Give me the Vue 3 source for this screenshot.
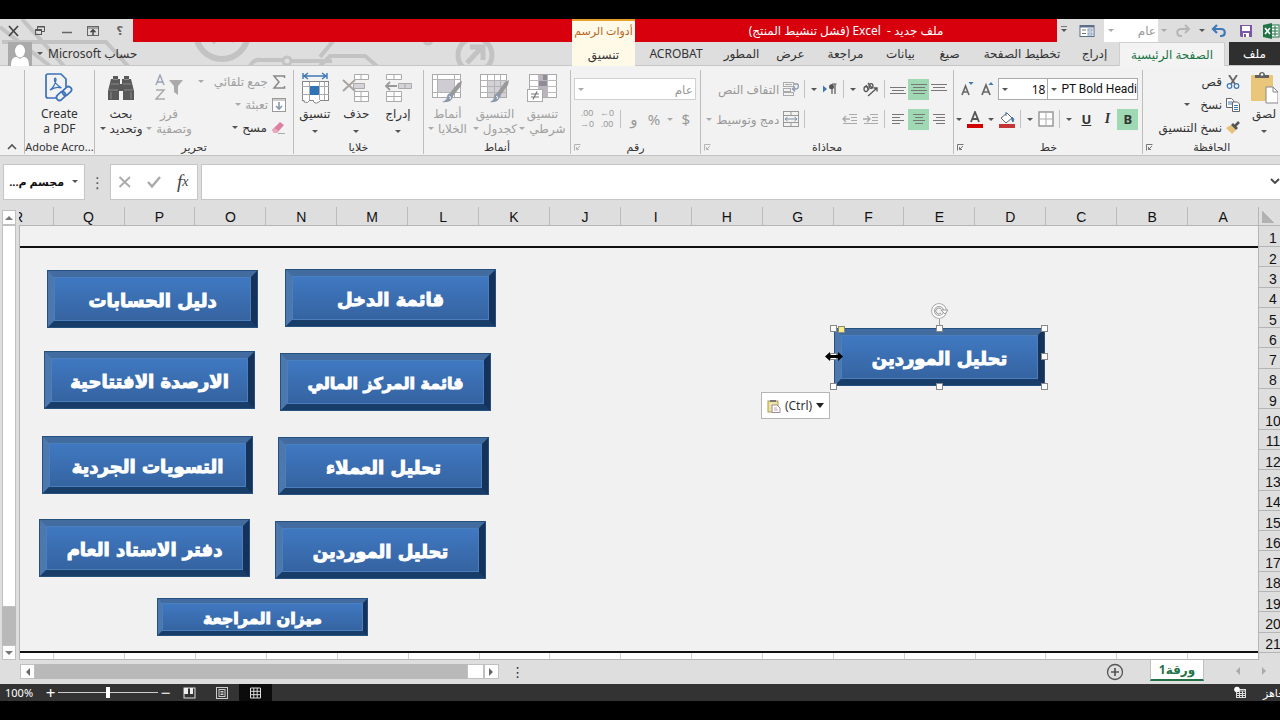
<script setup>
import { ref, h } from 'vue'

const icons = {
  close: [12, 12, '<path d="M2 1l9 10M11 1L2 11" stroke="#444" stroke-width="1.7" fill="none"/>'],
  restore: [12, 12, '<path d="M3.500 4V1.500h7v5H8" stroke="#555" fill="none"/><path d="M3 2h8" stroke="#555"/><rect x="1.500" y="5" width="6" height="4.500" stroke="#555" fill="none"/><path d="M1 5h7" stroke="#555" stroke-width="2"/>'],
  minimize: [12, 12, '<path d="M1 7.500h10" stroke="#666" stroke-width="1.500"/>'],
  ribbonOpts: [14, 12, '<rect x="1.500" y="1.500" width="11" height="9" fill="none" stroke="#666"/><path d="M1 3h12" stroke="#666"/><path d="M7 10V5M4.500 7.200L7 4.800l2.500 2.400" stroke="#444" stroke-width="1.500" fill="none"/>'],
  avatar: [24, 24, '<rect width="24" height="24" fill="#aaa"/><ellipse cx="12" cy="9" rx="5" ry="6.500" fill="#fff"/><path d="M3 24c0-8 3-9 6-9l3 2 3-2c3 0 6 1 6 9z" fill="#fff"/>'],
  excel: [18, 16, '<rect x="9" y="2" width="8" height="12" fill="#fff" stroke="#217346"/><path d="M10 5h6M10 8h6M10 11h6M13 3v10" stroke="#217346"/><path d="M1 2l9-2v16l-9-2z" fill="#217346"/><path d="M3 5l5 6M8 5l-5 6" stroke="#fff" stroke-width="1.600"/>'],
  save: [14, 14, '<path d="M1 1h12v12H2l-1-1z" fill="#7b55a8"/><rect x="3" y="2" width="8" height="5" fill="#fff"/><rect x="4" y="9" width="6" height="4" fill="#fff"/><rect x="5" y="10" width="2" height="3" fill="#7b55a8"/>'],
  undo: [16, 14, '<path d="M2 5h8c5 0 5 7 0 7H9M6 1L2 5l4 4" fill="none" stroke="#3f78b5" stroke-width="2.200"/>'],
  redo: [16, 14, '<path d="M14 5H6c-5 0-5 7 0 7h1M10 1l4 4-4 4" fill="none" stroke="#b5b5b5" stroke-width="2"/>'],
  form: [16, 14, '<rect x="1" y="1.500" width="14" height="11" fill="#fff" stroke="#5b6f88"/><path d="M1 2.500h14" stroke="#5b6f88" stroke-width="2"/><path d="M3 6h4M3 9.500h4" stroke="#777"/><rect x="9" y="5" width="4" height="2" fill="none" stroke="#7d96b5"/><rect x="9" y="9" width="4" height="2" fill="none" stroke="#7d96b5"/>'],
  paste: [28, 32, '<rect x="1" y="3" width="22" height="26" rx="1" fill="#eac67a"/><path d="M5 6V3h4c0-4 6-4 6 0h4v3z" fill="#5f5f5f"/><circle cx="12" cy="2.500" r="1.300" fill="#fff"/><path d="M16 15h7l5 5v11H16z" fill="#fff" stroke="#888"/><path d="M23 15v5h5" fill="none" stroke="#888"/>'],
  cut: [14, 14, '<path d="M3 0l6 9M11 0L5 9" stroke="#666" stroke-width="1.800"/><circle cx="3.500" cy="11" r="2.300" fill="none" stroke="#3f78b5" stroke-width="1.200"/><circle cx="10.500" cy="11" r="2.300" fill="none" stroke="#3f78b5" stroke-width="1.200"/>'],
  copy: [14, 14, '<path d="M.5.5h5l2 2v7h-7z" fill="#fff" stroke="#666"/><path d="M2 4h4M2 6h4" stroke="#3f78b5"/><path d="M6.500 4h5l2 2v7.500h-7z" fill="#fff" stroke="#666"/><path d="M8 7.500h4M8 9.500h4M8 11.500h4" stroke="#3f78b5"/>'],
  painter: [14, 14, '<path d="M0 7l5-3 5 5-4 4z" fill="#e8c178"/><path d="M5 4l2-2 5 5-2 2z" fill="#555"/><path d="M9 5l4-4" stroke="#555" stroke-width="2.500"/>'],
  borders: [16, 16, '<rect x="1" y="1" width="14" height="14" fill="#fff" stroke="#999" stroke-width="1.500"/><path d="M8 2v12M2 8h12" stroke="#aaa"/>'],
  bucket: [18, 17, '<path d="M3 7l6-5 5 5-6 5z" fill="#fff" stroke="#666"/><path d="M8 5V1M14 6q3 2 1 5-2-2-1-5" stroke="#3f78b5" fill="#3f78b5"/><rect x="1" y="13" width="16" height="4" fill="#c43535"/>'],
  fontColor: [18, 17, '<path d="M5 11L9 1l4 10M6.500 8h5" fill="none" stroke="#555" stroke-width="1.800"/><rect x="1" y="13" width="16" height="4" fill="#d40000"/>'],
  grow: [14, 16, '<path d="M1 14L5 4l4 10M2.500 11h5" fill="none" stroke="#666" stroke-width="1.700"/><path d="M7.500 4h5L10 1z" fill="#3f78b5"/>'],
  shrink: [14, 16, '<path d="M1 14L4.500 5 8 14M2.500 11h4" fill="none" stroke="#666" stroke-width="1.600"/><path d="M7.500 1h5L10 4z" fill="#3f78b5"/>'],
  vTop: [16, 14, '<path d="M0 2.500h16M2 5.500h12M0 8.500h16" stroke="#777" stroke-width="1.200"/>'],
  vMid: [16, 14, '<path d="M0 2.500h16M2 5.500h12M0 8.500h16M2 11.500h12" stroke="#777" stroke-width="1.200"/>'],
  vBot: [16, 14, '<path d="M0 5.500h16M2 8.500h12M0 11.500h16" stroke="#777" stroke-width="1.200"/>'],
  hRight: [16, 14, '<path d="M2 2.500h12M5 5.500h9M2 8.500h12M5 11.500h9" stroke="#777" stroke-width="1.200"/>'],
  hCenter: [16, 14, '<path d="M2 2.500h12M4 5.500h8M2 8.500h12M4 11.500h8" stroke="#777" stroke-width="1.200"/>'],
  hLeft: [16, 14, '<path d="M2 2.500h12M2 5.500h8M2 8.500h12M2 11.500h8" stroke="#777" stroke-width="1.200"/>'],
  orient: [16, 16, '<g fill="none" stroke="#555" stroke-width="1.300"><ellipse cx="4" cy="8" rx="2" ry="2.500"/><path d="M4 4l3 5M6 2l4 5"/><ellipse cx="9" cy="5" rx="2" ry="2.400"/><path d="M6 15l9-8M11.500 7H15v3.500"/></g>'],
  rtlText: [14, 12, '<path d="M0 2.500l4 3.500-4 3.500z" fill="#3f78b5"/><path d="M9 11V1M12 11V1M13.500 1H9" stroke="#555" stroke-width="1.200"/><circle cx="8.500" cy="3.700" r="2.500" fill="#555"/>'],
  indentR: [15, 12, '<path d="M7 1.500h8M9 4.500h6M9 7.500h6M1 10.500h14" stroke="#aaa"/><path d="M0 6h7M4 3l3 3-3 3" fill="none" stroke="#aaa" stroke-width="1.400"/>'],
  indentL: [15, 12, '<path d="M7 1.500h8M9 4.500h6M9 7.500h6M1 10.500h14" stroke="#aaa"/><path d="M8 6H1M4 3L1 6l3 3" fill="none" stroke="#aaa" stroke-width="1.400"/>'],
  wrap: [16, 16, '<g fill="none" stroke="#aaa"><rect x=".5" y="1.500" width="10" height="4"/><rect x=".5" y="7.500" width="7" height="3"/><rect x=".5" y="11.500" width="10" height="3"/><path d="M2 3.500h7"/></g><path d="M11 3h3c2 0 2 5-1 5H10M12 5.500L9.500 8l2.500 2.500" fill="none" stroke="#8e9bb0" stroke-width="1.400"/>'],
  merge: [16, 16, '<g fill="none" stroke="#999"><rect x=".5" y=".5" width="15" height="15"/><path d="M0 4.500h16M0 11.500h16M8 0v4M8 12v4"/></g><path d="M2 8h12M4.500 6L2 8l2.500 2M11.500 6L14 8l-2.500 2" fill="none" stroke="#7f8ea5"/>'],
  cond: [30, 30, '<rect x="2.500" y="1.500" width="27" height="23" fill="#fff" stroke="#aaa"/><path d="M3 7.500h27M3 13.500h27M3 19.500h27M11.500 2v22M20.500 2v22" stroke="#bbb"/><rect x="12" y="2" width="8" height="22" fill="#b9b4be"/><path d="M16 2h4v5h-4zM12 8h8v5h-8z" fill="#908c96"/><rect x=".5" y="16.500" width="15" height="12" fill="#fff" stroke="#aaa"/><path d="M4 21h8M4 24h8M10 18.500l-4 8" stroke="#777" stroke-width="1.200"/>'],
  tbl: [30, 30, '<rect x=".5" y="1.500" width="26" height="23" fill="#fff" stroke="#aaa"/><rect x="7" y="8" width="19" height="16" fill="#d3d0d6"/><path d="M1 7.500h26M1 13.500h26M1 19.500h26M7.500 2v22M14.500 2v22M20.500 2v22" stroke="#b4b4b4"/><path d="M29 7l-4 2-8 11 3 3 8-11z" fill="#999"/><path d="M17 20q5 1 2 6-3 4-9 3 4-2 4-5 0-3 3-4z" fill="#8c99aa"/><path d="M16 23q3 1 1 3" stroke="#fff" fill="none"/>'],
  cellSt: [32, 30, '<rect x="1.500" y="1.500" width="28" height="23" fill="#fff" stroke="#aaa"/><rect x="7" y="7" width="16" height="12" fill="#cfccd3"/><path d="M2 6.500h28M2 19.500h28M6.500 2v22M23.500 2v22" stroke="#b4b4b4"/><path d="M31 8l-4 2-8 10 3 3 8-10z" fill="#999"/><path d="M19 20q5 1 2 6-3 4-10 3 5-2 5-5 0-3 3-4z" fill="#8c99aa"/><path d="M18 23q3 1 1 3" stroke="#fff" fill="none"/>'],
  insert: [28, 30, '<g fill="#fff" stroke="#aaa"><path d="M2.500 1.500h15v5h-15zM10 1.500v5M2.500 18.500h15v10h-15zM10 18.500v10M2.500 23.500h15"/><path d="M14.500 10.500h13v5h-13zM21 10.500v5" fill="#d5d2d8"/></g><path d="M13 13H2M6 9l-4 4 4 4" fill="none" stroke="#999" stroke-width="1.800"/>'],
  del: [28, 30, '<g fill="#fff" stroke="#aaa"><path d="M12.500 1.500h14v5h-14zM19 1.500v5M12.500 18.500h14v10h-14zM19 18.500v10M12.500 23.500h14"/><path d="M11.500 10.500h11v5h-11z" fill="#d5d2d8"/></g><path d="M1 7l12 11M13 7L1 18" fill="none" stroke="#aaa59e" stroke-width="2"/>'],
  fmt: [28, 32, '<path d="M2 1v6M26 1v6M3 4h22M7 1L3 4l4 3M21 1l4 3-4 3" fill="none" stroke="#3f78b5" stroke-width="1.400"/><rect x="1.500" y="9.500" width="26" height="19" fill="#fff" stroke="#888"/><path d="M1 14.500h27M1 22.500h27M8.500 10v18M18.500 10v18M23.500 10v18" stroke="#aaa"/><rect x="9" y="14" width="9" height="9" fill="#2f75b5"/><path d="M3 28v2q4 2 6-2M12 28q1 5 6 2l2-2" fill="#fff" stroke="#888"/>'],
  sigma: [14, 14, '<path d="M12.500 3V1H2l5 6-5 6h10.500v-2" fill="none" stroke="#888" stroke-width="1.500"/>'],
  fill: [14, 14, '<rect x=".5" y=".5" width="13" height="13" fill="#fff" stroke="#999"/><path d="M0 2h14" stroke="#999"/><path d="M7 4v7M4 8l3 3 3-3" fill="none" stroke="#8798ad" stroke-width="1.600"/>'],
  eraser: [15, 14, '<path d="M1 9L9 1l4 3-7 8H3z" fill="#dd7fa2"/><path d="M1 9l2-2 5 3-2 2H3z" fill="#e9a9c0"/><path d="M7 12.500h7" stroke="#aaa"/>'],
  sort: [28, 28, '<path d="M1 11L5 1l4 10M2.500 8h5" fill="none" stroke="#9aa3b3" stroke-width="1.400"/><path d="M1 16h8l-8 9h9" fill="none" stroke="#aaa" stroke-width="1.500"/><path d="M14 6h14l-5 6v9l-4-3v-6z" fill="#aaa"/>'],
  find: [28, 26, '<path d="M6 1h5v3h2v5h2V4h2V1h5v3h2l3 12v9H16v-9h-4v9H1v-9L4 4h2z" fill="#595959"/><path d="M6 4.500h5M17 4.500h5M4 9h8M16 9h8M2 15h9M17 15h9M4 17v7M24 17v7" stroke="#8b8b8b"/>'],
  pdf: [28, 30, '<path d="M3 1h13l5 5v8M3 1q-2 0-2 2v20q0 2 2 2h8" fill="none" stroke="#3b72ba" stroke-width="1.700"/><path d="M5 17q5-4 6-10 0-3-1.500-1-1 4 7 9-6-2-11 2" fill="none" stroke="#3b72ba" stroke-width="1.300"/><g fill="none" stroke="#3b72ba" stroke-width="1.700"><rect x="11" y="20" width="10" height="6" rx="3" transform="rotate(-42 16 23)"/><rect x="17" y="15" width="10" height="6" rx="3" transform="rotate(-42 22 18)"/></g>'],
  launcher: [7, 7, '<path d="M6.500.5h-6v6M6 2L2.500 5.500M2.500 3v2.500H5" fill="none" stroke="#777"/>'],
  chevUp: [10, 7, '<path d="M1 6l4-4 4 4" fill="none" stroke="#555" stroke-width="1.600"/>'],
  chevDown: [10, 7, '<path d="M1 1l4 4 4-4" fill="none" stroke="#444" stroke-width="1.800"/>'],
  cancel: [14, 12, '<path d="M1.500 1l10.500 10M12 1L1.500 11" stroke="#aaa" stroke-width="1.800"/>'],
  enter: [14, 12, '<path d="M1 6l4 4.500L13 1" fill="none" stroke="#aaa" stroke-width="2.400"/>'],
  rotate: [18, 18, '<circle cx="8" cy="8" r="6" fill="none" stroke="#999" stroke-width="3.600"/><circle cx="8" cy="8" r="6" fill="none" stroke="#fff" stroke-width="2"/><path d="M10 6a3 3 0 1 0 0 4" fill="none" stroke="#999"/><path d="M10 7h7l-3 4z" fill="#fff" stroke="#999"/>'],
  resize: [18, 9, '<path d="M0 4.500L5 0v3h8V0l5 4.500L13 9V6H5v3z" fill="#000"/>'],
  clip: [14, 14, '<rect x="1" y="2" width="10" height="11" fill="#eee3a0" stroke="#a79b55"/><path d="M3 3V1h6v2z" fill="#777"/><path d="M5 6h5l3 3v4.500H5z" fill="#fff" stroke="#9a8a98"/><path d="M7 9h3M7 11h4" stroke="#c6a1aa"/>'],
  add: [18, 18, '<circle cx="9" cy="9" r="7.500" fill="none" stroke="#555" stroke-width="1.300"/><path d="M9 5v8M5 9h8" stroke="#555" stroke-width="1.700"/>'],
  vBreak: [13, 12, '<rect x="1" y="1" width="11" height="10" fill="none" stroke="#ddd"/><path d="M1 1h4v6H1zM7 1h3v6H7z" fill="#eee"/>'],
  vPage: [13, 12, '<rect x=".5" y=".5" width="11" height="11" fill="none" stroke="#ccc"/><rect x="3" y="2.500" width="6" height="7" fill="none" stroke="#ccc"/><path d="M4.500 4.500h3M4.500 6h3M4.500 7.500h3" stroke="#ccc"/>'],
  vGrid: [13, 12, '<path d="M1.500 1h10v10h-10zM1 4.300h11M1 7.700h11M4.800 1v10M8.200 1v10" fill="none" stroke="#ddd"/>'],
  macro: [13, 13, '<rect x="2.500" y="3.500" width="9" height="8" fill="none" stroke="#ddd"/><path d="M2 5h10M3 7.500h8M3 9.500h8M5.500 5v6M8.500 5v6" stroke="#ddd"/><circle cx="3" cy="3.500" r="2.800" fill="#fff"/>'],
}

const Ico = (props) => {
  const [w, ht, body] = icons[props.name]
  return h('svg', { width: w, height: ht, viewBox: `0 0 ${w} ${ht}`, 'aria-hidden': 'true', innerHTML: body })
}
Ico.props = ['name']

const tabs = [
  { t: 'ملف', c: 'file' },
  { t: 'الصفحة الرئيسية', c: 'active' },
  { t: 'إدراج', c: 'w-s' },
  { t: 'تخطيط الصفحة', c: 'w-xl' },
  { t: 'صيغ', c: 'w-s' },
  { t: 'بيانات', c: 'w-s' },
  { t: 'مراجعة', c: 'w-m' },
  { t: 'عرض', c: 'w-s' },
  { t: 'المطور', c: 'w-s' },
  { t: 'ACROBAT', c: 'w-l' },
]

const styleButtons = [
  { i: 'cond', a: 'تنسيق', b: 'شرطي' },
  { i: 'tbl', a: 'التنسيق', b: 'كجدول' },
  { i: 'cellSt', a: 'أنماط', b: 'الخلايا' },
]
const cellButtons = [
  { i: 'insert', a: 'إدراج' },
  { i: 'del', a: 'حذف' },
  { i: 'fmt', a: 'تنسيق' },
]

const columns = 'ABCDEFGHIJKLMNOPQR'.split('')
const rows = Array.from({ length: 22 }, (_, i) => i + 1)

const shapes = [
  { t: 'دليل الحسابات', x: 27, y: 44 },
  { t: 'قائمة الدخل', x: 265, y: 43 },
  { t: 'الارصدة الافتتاحية', x: 24, y: 125 },
  { t: 'قائمة المركز المالي', x: 260, y: 127, tight: true },
  { t: 'التسويات الجردية', x: 22, y: 210 },
  { t: 'تحليل العملاء', x: 258, y: 211 },
  { t: 'دفتر الاستاد العام', x: 19, y: 293 },
  { t: 'تحليل الموردين', x: 255, y: 295 },
  { t: 'ميزان المراجعة', x: 137, y: 372, small: true, tight: true },
  { t: 'تحليل الموردين', x: 814, y: 102, selected: true },
]
const handles = ['nw', 'n', 'ne', 'w', 'e', 'sw', 's', 'se']

const fontName = ref('PT Bold Heading')
const fontSize = ref('18')
const formula = ref('')
const zoom = ref(100)
</script>

<template>
  <div class="app" dir="rtl">
    <header class="head">
      <svg class="circuit" width="520" height="47" viewBox="0 0 520 47" aria-hidden="true">
        <g fill="none" stroke="#c3c3c3" stroke-width="4">
          <path d="M0 8l50 39M22 0l42 47M2 23h104l22 24M320 47l10-10h35l12 10M320 38l14-17h90" />
          <circle cx="222" cy="14" r="26" stroke-width="6" />
          <path d="M206 14l8 8 8-8 12 8" stroke-width="5" />
          <circle cx="287" cy="42" r="4" stroke-width="3" />
          <path d="M250 47q4-7 10-6h22M292 42h40" />
          <circle cx="428" cy="21" r="4" stroke-width="3" />
          <circle cx="475" cy="36" r="17" stroke-width="5" />
          <path d="M467 44l15-16M470 28h13v13" stroke-width="5" />
        </g>
      </svg>
      <div class="titlebar">
        <div class="qat">
          <span class="cell q-xl"><Ico name="excel" /></span>
          <button class="cell q-save" aria-label="حفظ"><Ico name="save" /></button>
          <button class="cell q-undo" aria-label="تراجع"><Ico name="undo" /></button>
          <button class="cell q-car" aria-label="خيارات التراجع"><i class="caret"></i></button>
          <button class="cell q-redo" aria-label="إعادة"><Ico name="redo" /></button>
          <button class="cell q-car" aria-label="خيارات الإعادة"><i class="caret dim"></i></button>
          <div class="combo q-combo">
            <select aria-label="تنسيق الأرقام السريع"><option>عام</option></select>
            <i class="caret dim"></i>
          </div>
          <button class="cell q-form" aria-label="نموذج"><Ico name="form" /></button>
          <button class="cell q-end" aria-label="تخصيص"><i class="caret bar"></i></button>
        </div>
        <h1 class="title">ملف جديد -&nbsp; Excel (فشل تنشيط المنتج)</h1>
        <div class="ctx-title">أدوات الرسم</div>
        <div class="red"></div>
        <div class="win">
          <button aria-label="تعليمات" class="help">؟</button>
          <button aria-label="خيارات عرض الشريط"><Ico name="ribbonOpts" /></button>
          <button aria-label="تصغير"><Ico name="minimize" /></button>
          <button aria-label="استعادة"><Ico name="restore" /></button>
          <button aria-label="إغلاق"><Ico name="close" /></button>
        </div>
      </div>
      <nav class="tabs">
        <button v-for="t in tabs" :key="t.t" class="tab" :class="t.c">{{ t.t }}</button>
        <button class="tab ctx">تنسيق</button>
        <span class="grow"></span>
        <button class="account">
          <span>حساب Microsoft</span><i class="caret"></i><Ico name="avatar" />
        </button>
      </nav>
    </header>

    <section class="ribbon">
      <div class="group g-clip">
        <div class="body">
          <button class="big b-paste"><span class="pic"><Ico name="paste" /></span><span>لصق</span><span><i class="caret"></i></span></button>
          <div class="stack">
            <button><Ico name="cut" />قص</button>
            <button><Ico name="copy" />نسخ <i class="caret far"></i></button>
            <button><Ico name="painter" />نسخ التنسيق</button>
          </div>
        </div>
        <div class="cap">الحافظة<Ico name="launcher" class="launch" /></div>
      </div>

      <div class="group g-font">
        <div class="rows">
          <div class="row">
            <div class="combo c-font" dir="ltr"><i class="caret"></i><input v-model="fontName" aria-label="الخط" /></div>
            <div class="combo c-size" dir="ltr"><i class="caret"></i><input v-model="fontSize" aria-label="حجم الخط" /></div>
            <button class="cell w20" aria-label="تكبير الخط"><Ico name="grow" /></button>
            <button class="cell w20" aria-label="تصغير الخط"><Ico name="shrink" /></button>
          </div>
          <div class="row">
            <button class="cell w21 on"><b>B</b></button>
            <button class="cell w20 ital"><i>I</i></button>
            <button class="cell w22"><u>U</u></button>
            <button class="cell w12" aria-label="خيارات التسطير"><i class="caret"></i></button>
            <span class="sep"></span>
            <button class="cell w20" aria-label="حدود"><Ico name="borders" /></button>
            <button class="cell w12" aria-label="خيارات الحدود"><i class="caret"></i></button>
            <span class="sep"></span>
            <button class="cell w20" aria-label="لون التعبئة"><Ico name="bucket" /></button>
            <button class="cell w12" aria-label="خيارات التعبئة"><i class="caret"></i></button>
            <button class="cell w20" aria-label="لون الخط"><Ico name="fontColor" /></button>
            <button class="cell w12" aria-label="خيارات اللون"><i class="caret"></i></button>
          </div>
        </div>
        <div class="cap">خط<Ico name="launcher" class="launch" /></div>
      </div>

      <div class="group g-align">
        <div class="rows">
          <div class="row">
            <button class="cell w20" aria-label="محاذاة للأعلى"><Ico name="vTop" /></button>
            <button class="cell w21 on" aria-label="محاذاة للوسط"><Ico name="vMid" /></button>
            <button class="cell w20" aria-label="محاذاة للأسفل"><Ico name="vBot" /></button>
            <span class="sep"></span>
            <button class="cell w22" aria-label="الاتجاه"><Ico name="orient" /></button>
            <button class="cell w12" aria-label="خيارات الاتجاه"><i class="caret"></i></button>
            <span class="sep"></span>
            <button class="cell w20" aria-label="اتجاه النص"><Ico name="rtlText" /></button>
            <button class="cell w12" aria-label="خيارات النص"><i class="caret"></i></button>
            <span class="sep"></span>
            <button class="txt"><Ico name="wrap" />التفاف النص</button>
          </div>
          <div class="row">
            <button class="cell w20" aria-label="محاذاة لليمين"><Ico name="hRight" /></button>
            <button class="cell w21 on" aria-label="توسيط"><Ico name="hCenter" /></button>
            <button class="cell w20" aria-label="محاذاة لليسار"><Ico name="hLeft" /></button>
            <span class="sep"></span>
            <button class="cell w22" aria-label="زيادة المسافة"><Ico name="indentR" /></button>
            <button class="cell w20" aria-label="إنقاص المسافة"><Ico name="indentL" /></button>
            <span class="blank"></span>
            <span class="sep"></span>
            <button class="txt"><Ico name="merge" />دمج وتوسيط<i class="caret dim"></i></button>
          </div>
        </div>
        <div class="cap">محاذاة<Ico name="launcher" class="launch dim" /></div>
      </div>

      <div class="group g-num">
        <div class="rows">
          <div class="row">
            <div class="combo c-num">
              <select aria-label="تنسيق الأرقام"><option>عام</option></select>
              <i class="caret dim"></i>
            </div>
          </div>
          <div class="row">
            <button class="cell w20 sym">$</button>
            <button class="cell w12" aria-label="العملات"><i class="caret dim"></i></button>
            <button class="cell w20 sym">%</button>
            <button class="cell w20 sym">و</button>
            <span class="sep"></span>
            <button class="cell w20 dec" dir="ltr">←0<br />.00</button>
            <button class="cell w20 dec" dir="ltr">.00<br />→0</button>
          </div>
        </div>
        <div class="cap">رقم<Ico name="launcher" class="launch dim" /></div>
      </div>

      <div class="group g-style">
        <div class="body">
          <button v-for="b in styleButtons" :key="b.a" class="big off">
            <span class="pic"><Ico :name="b.i" /></span><span>{{ b.a }}</span><span class="l2">{{ b.b }}<i class="caret dim"></i></span>
          </button>
        </div>
        <div class="cap">أنماط</div>
      </div>

      <div class="group g-cells">
        <div class="body">
          <button v-for="b in cellButtons" :key="b.a" class="big">
            <span class="pic"><Ico :name="b.i" /></span><span>{{ b.a }}</span><span><i class="caret"></i></span>
          </button>
        </div>
        <div class="cap">خلايا</div>
      </div>

      <div class="group g-edit">
        <div class="body">
          <div class="stack">
            <button class="off"><Ico name="sigma" />جمع تلقائي<i class="caret dim far"></i></button>
            <button class="off"><Ico name="fill" />تعبئة<i class="caret dim"></i></button>
            <button><Ico name="eraser" />مسح<i class="caret"></i></button>
          </div>
          <button class="big off"><span class="pic"><Ico name="sort" /></span><span>فرز</span><span class="l2">وتصفية<i class="caret dim"></i></span></button>
          <button class="big"><span class="pic"><Ico name="find" /></span><span>بحث</span><span class="l2">وتحديد<i class="caret"></i></span></button>
        </div>
        <div class="cap">تحرير</div>
      </div>

      <div class="group g-pdf">
        <div class="body">
          <button class="big" dir="ltr"><span class="pic"><Ico name="pdf" /></span><span>Create</span><span>a PDF</span></button>
        </div>
        <div class="cap" dir="ltr">Adobe Acro...</div>
      </div>

      <div class="fold"><button aria-label="طي الشريط"><Ico name="chevUp" /></button></div>
    </section>

    <section class="fbar" dir="ltr">
      <button class="namebox"><b dir="rtl">مجسم م...</b><i class="caret"></i></button>
      <span class="dots">⋮</span>
      <div class="fx">
        <button aria-label="إلغاء"><Ico name="cancel" /></button>
        <button aria-label="إدخال"><Ico name="enter" /></button>
        <button class="fxb"><i>f</i>x</button>
      </div>
      <div class="finput">
        <input v-model="formula" aria-label="شريط الصيغة" dir="rtl" />
        <button aria-label="توسيع"><Ico name="chevDown" /></button>
      </div>
    </section>

    <main class="sheet">
      <div class="rowheads">
        <div class="corner"></div>
        <div v-for="r in rows" :key="r" class="rh" :class="{ first: r === 1, last: r === 22 }">{{ r }}</div>
      </div>
      <div class="center">
        <div class="colheads">
          <div v-for="c in columns" :key="c" class="ch" :class="{ cut: c === 'R' }"><span>{{ c }}</span></div>
        </div>
        <div class="canvas">
          <div class="firstrow"></div>
          <div class="field"></div>
          <div class="lastrow"><div v-for="c in columns" :key="c" class="lc" :class="{ cut: c === 'R' }"></div></div>
          <button
            v-for="(s, i) in shapes"
            :key="i"
            class="shape"
            :class="{ small: s.small, tight: s.tight }"
            :style="{ left: s.x + 'px', top: s.y + 'px' }"
          >
            <span>{{ s.t }}</span>
            <template v-if="s.selected">
              <i v-for="k in handles" :key="k" class="handle" :class="k"></i>
              <i class="handle yellow"></i>
              <i class="stem"></i>
              <Ico name="rotate" class="rot" />
              <Ico name="resize" class="cursor" />
            </template>
          </button>
          <button class="pasteopt" dir="ltr"><Ico name="clip" />(Ctrl)<i class="caret wide"></i></button>
        </div>
      </div>
      <div class="vscroll">
        <button aria-label="لأعلى"><i class="tri up"></i></button>
        <div class="thumb"></div>
        <div class="track"></div>
        <button aria-label="لأسفل"><i class="tri down"></i></button>
      </div>
    </main>

    <footer class="bottom" dir="ltr">
      <div class="hscroll">
        <button aria-label="يسار"><i class="tri left"></i></button>
        <div class="track"></div>
        <div class="thumb"></div>
        <button aria-label="يمين"><i class="tri right"></i></button>
      </div>
      <span class="hdots">⋮</span>
      <span class="grow"></span>
      <button class="addsheet" aria-label="ورقة جديدة"><Ico name="add" /></button>
      <button class="sheettab" dir="rtl">ورقة1</button>
      <div class="navs"><button aria-label="السابق"><i class="tri left dim"></i></button><button aria-label="التالي"><i class="tri right dim"></i></button></div>
    </footer>

    <div class="status" dir="ltr">
      <span class="pct">100%</span>
      <button class="zb" aria-label="تكبير">+</button>
      <input v-model="zoom" class="zoom" type="range" min="0" max="200" dir="rtl" aria-label="التكبير" />
      <button class="zb" aria-label="تصغير العرض">−</button>
      <button class="view" aria-label="فواصل الصفحات"><Ico name="vBreak" /></button>
      <button class="view" aria-label="تخطيط الصفحة"><Ico name="vPage" /></button>
      <button class="view sel" aria-label="عادي"><Ico name="vGrid" /></button>
      <span class="grow"></span>
      <Ico name="macro" />
      <span class="ready">جاهز</span>
    </div>
  </div>
</template>

<style>
body { background: #000; }
</style>

<style scoped>
.app { display: flex; flex-direction: column; min-height: 100vh; box-sizing: border-box; padding: 19px 0; background: #000; overflow: hidden; font-family: "Noto Sans", "DejaVu Sans", sans-serif; font-size: 12px; color: #333; }
.app *, .app *::before { box-sizing: border-box; }
button { display: flex; align-items: center; justify-content: center; margin: 0; padding: 0; border: 0; background: none; font: inherit; color: inherit; white-space: nowrap; }
input, select { min-width: 0; margin: 0; padding: 0; border: 0; outline: 0; background: none; font: inherit; color: inherit; appearance: none; }
svg { display: block; flex: none; }
.grow { flex: 1; }
.caret { flex: none; display: inline-block; width: 0; height: 0; border: 3px solid transparent; border-top-color: #555; border-bottom: 0; }
.caret.dim { border-top-color: #aaa; }
.caret.wide { border-width: 5px 4px 0; border-top-color: #222; }
.caret.bar { position: relative; }
.caret.bar::before { content: ""; position: absolute; left: -3px; top: -6px; width: 6px; height: 1px; background: #777; }
.cell { flex: none; }

.head { position: relative; background: #dedede; }
.circuit { position: absolute; left: 0; top: 0; }
.titlebar { position: relative; display: flex; height: 23px; }
.qat { display: flex; flex: none; width: 223px; align-items: stretch; }
.q-xl { display: flex; align-items: center; width: 18px; }
.q-save { width: 32px; }
.q-undo { width: 22px; }
.q-car { width: 12px; }
.q-redo { width: 26px; }
.q-form { width: 34px; }
.q-end { width: 12px; }
.combo { display: flex; align-items: center; background: #fff; }
.q-combo { width: 54px; padding: 0 2px 0 4px; color: #999; }
.combo select { flex: 1; }
.title { flex: none; width: 422px; margin: 0; background: #d9000d; color: #fff; font-size: 12px; font-weight: 400; line-height: 23px; text-align: center; white-space: nowrap; }
.ctx-title { flex: none; width: 63px; background: #fff9e8; border-top: 2px solid #e5a12a; color: #b5651d; font-size: 11px; line-height: 20px; text-align: center; white-space: nowrap; }
.red { flex: 1; background: #d9000d; }
.win { display: flex; flex: none; width: 133px; }
.win button { flex: 1; }
.help { font-weight: 700; color: #666; }

.tabs { position: relative; display: flex; height: 24px; border-bottom: 1px solid #c6c6c6; }
.tab { flex: none; color: #333; }
.tab.file { width: 51px; margin-left: 4px; background: #2f2f2f; color: #fff; }
.tab.active { width: 106px; height: 24px; background: #f3f3f3; border: 1px solid #cfcfcf; border-bottom: 0; color: #217346; }
.tab.ctx { width: 63px; height: 24px; background: #fff9e8; }
.w-s { width: 49px; }
.w-m { width: 61px; }
.w-l { width: 82px; }
.w-xl { width: 96px; }
.account { gap: 5px; padding-left: 8px; }

.ribbon { display: flex; height: 90px; background: #f2f2f2; border-bottom: 1px solid #c3c3c3; }
.group { position: relative; display: flex; flex-direction: column; margin: 4px 0 1px; border-left: 1px solid #bdbdbd; min-width: 0; }
.g-clip { flex: 138 1 0; }
.g-font { flex: 190 1 0; }
.g-align { flex: 255 1 0; }
.g-num { flex: 130 1 0; }
.g-style { flex: 148 1 0; }
.g-cells { flex: 130 1 0; }
.g-edit { flex: 200 1 0; }
.g-pdf { flex: 70 1 0; }
.fold { flex: 24 1 0; display: flex; align-items: flex-end; justify-content: center; padding-bottom: 5px; }
.body { flex: 1; display: flex; padding-right: 4px; }
.g-clip .body, .g-pdf .body { padding-right: 0; }
.big { flex: 1; flex-direction: column; justify-content: flex-start; line-height: 15px; min-width: 0; }
.big .pic { height: 36px; display: flex; align-items: center; }
.big span { white-space: nowrap; }
.b-paste { flex: none; width: 32px; }
.l2 { display: flex; align-items: center; gap: 4px; }
.off { color: #a0a0a0; }
.stack { display: flex; flex-direction: column; }
.g-clip .stack { padding-right: 8px; }
.g-edit .stack { width: 96px; padding-right: 3px; }
.g-edit .big { flex: none; width: 48px; }
.stack button { height: 23px; justify-content: flex-start; gap: 4px; }
.stack .far { margin-right: 6px; }
.cap { position: relative; flex: none; height: 14px; line-height: 14px; font-size: 11px; text-align: center; white-space: nowrap; }
.launch { position: absolute; left: 3px; top: 4px; }
.launch.dim { opacity: .5; }
.rows { flex: 1; display: flex; flex-direction: column; gap: 8px; padding: 8px 4px 0 0; }
.row { display: flex; align-items: center; height: 22px; }
.row .cell { height: 21px; }
.w12 { width: 12px; }
.w20 { width: 20px; }
.w21 { width: 21px; }
.w22 { width: 22px; }
.on { background: #9fd9b4; }
.sep { flex: none; width: 1px; height: 18px; margin: 0 3px; background: #c2c2c2; }
.blank { flex: none; width: 31px; }
.row b, .row u { font-weight: 700; font-size: 13px; }
.ital { font: 700 14px "Liberation Serif", serif; }
.c-font, .c-size, .c-num { height: 22px; border: 1px solid #ababab; font-size: 12px; color: #111; }
.c-font { width: 91px; gap: 4px; padding-left: 3px; font-family: Roboto, sans-serif; }
.c-font input { width: 76px; }
.c-size { width: 49px; padding: 0 2px 0 3px; border-right: 0; }
.c-size input { flex: 1; width: 20px; text-align: right; }
.c-num { flex: 1; margin-left: 3px; padding: 0 2px 0 3px; border-color: #d0d0d0; color: #999; }
.txt { gap: 4px; flex: 1; justify-content: flex-start; margin-right: 2px; color: #999; }
.sym { font-size: 15px; color: #999; }
.dec { font: 9px/11px "Liberation Sans", Arial, sans-serif; color: #999; }

.fbar { display: flex; align-items: center; height: 51px; padding-left: 3px; background: #dedede; }
.namebox, .fx, .finput { height: 36px; background: #fff; border: 1px solid #c6c6c6; }
.namebox { flex: none; width: 82px; gap: 8px; justify-content: flex-end; padding-right: 6px; color: #111; font-size: 11px; }
.dots { flex: none; width: 25px; text-align: center; font-size: 15px; color: #555; }
.fx { display: flex; flex: none; width: 88px; margin-right: 3px; }
.fx button { flex: 1; }
.fxb { font: italic 400 14px "Liberation Serif", serif; color: #444; }
.fxb i { font-size: 19px; }
.finput { flex: 1; display: flex; border-right: 0; }
.finput input { flex: 1; }

.sheet { flex: 1; display: flex; min-height: 0; background: #dedede; }
.rowheads { flex: none; width: 22px; display: flex; flex-direction: column; border-left: 1px solid #b5b5b5; font: 14px "Liberation Sans", Arial, sans-serif; color: #111; }
.corner { height: 19px; border-bottom: 1px solid #b5b5b5; background: linear-gradient(45deg, #b2b2b2 50%, transparent 51%) 3px 4px / 12px 12px no-repeat; }
.rh { flex: 1 1 0; min-height: 0; display: flex; align-items: center; justify-content: center; padding: 4px 0 0 7px; border-bottom: 1px solid #b5b5b5; line-height: 16px; }
.rh.first { flex: none; height: 21px; }
.rh.last { flex: none; height: 7px; align-items: flex-start; overflow: hidden; border-bottom: 0; }
.center { flex: 1; min-width: 0; display: flex; flex-direction: column; }
.colheads { display: flex; height: 19px; border-bottom: 1px solid #b5b5b5; font: 14px "Liberation Sans", Arial, sans-serif; color: #111; }
.ch { flex: 709 1 0; min-width: 0; display: flex; align-items: center; justify-content: center; border-left: 1px solid #bbb; padding-top: 2px; }
.ch.cut { flex-grow: 340; justify-content: flex-end; overflow: hidden; border-left: 0; }
.ch.cut span { margin-left: -6px; }
.canvas { position: relative; flex: 1; display: flex; flex-direction: column; background: #f1f1f1; border-left: 1px solid #b5b5b5; }
.firstrow { height: 22px; border-bottom: 2px solid #111; }
.field { flex: 1; }
.lastrow { display: flex; height: 9px; background: #fff; border-top: 2px solid #111; border-bottom: 1px solid #b5b5b5; }
.lc { flex: 709 1 0; border-left: 1px solid #d0d0d0; }
.lc.cut { flex-grow: 340; border-left: 0; }

.shape { position: absolute; width: 211px; height: 58px; padding-top: 4px; border: 7px solid; border-color: #426c9f #14325a #173d68 #4d78ae; outline: 1px solid #26517f; outline-offset: -1px; background: linear-gradient(#4079c2, #3563a0); background-clip: padding-box; box-shadow: inset 0 0 0 1px #4a7fbd; color: #fff; font-family: "DejaVu Sans", sans-serif; font-weight: 700; font-size: 18px; line-height: 30px; -webkit-text-stroke: 1px #fff; }
.shape.small { height: 38px; border-width: 5px; }
.shape.tight { font-size: 16px; }
.handle { position: absolute; width: 7px; height: 7px; background: #fff; border: 1px solid #888; }
.nw, .w, .sw { left: -11px; }
.n, .s { left: 95px; }
.ne, .e, .se { left: 200px; }
.nw, .n, .ne { top: -10px; }
.w, .e { top: 18px; }
.sw, .s, .se { top: 48px; }
.yellow { left: -3px; top: -9px; background: #f5ee7a; }
.stem { position: absolute; left: 98px; top: -16px; width: 1px; height: 6px; background: #999; }
.rot { position: absolute; left: 90px; top: -32px; }
.cursor { position: absolute; left: -16px; top: 17px; }
.pasteopt { position: absolute; left: 741px; top: 166px; width: 69px; height: 27px; gap: 4px; background: #fff; border: 1px solid #b5b5b5; }

.vscroll { flex: none; width: 19px; display: flex; flex-direction: column; padding: 3px 3px 0 2px; }
.vscroll button { height: 15px; background: #fff; border: 1px solid #c0c0c0; }
.vscroll .thumb { flex: 382 1 0; background: #fff; border: 1px solid #c0c0c0; }
.vscroll .track { flex: 38 1 0; background: #b9b9b9; }
.tri { width: 0; height: 0; border: 4px solid transparent; }
.up { border-bottom-color: #777; border-top: 0; }
.down { border-top-color: #777; border-bottom: 0; }
.left { border-right-color: #666; border-left: 0; }
.right { border-left-color: #666; border-right: 0; }
.left.dim { border-right-color: #aaa; }
.right.dim { border-left-color: #aaa; }

.bottom { display: flex; align-items: flex-start; height: 24px; padding-left: 20px; background: #dedede; }
.hscroll { display: flex; flex: 0 0 38%; height: 15px; margin-top: 4px; }
.hscroll button { width: 15px; background: #fff; border: 1px solid #c0c0c0; }
.hscroll .track { flex: 1; background: #b9b9b9; }
.hscroll .thumb { width: 17px; background: #fff; border: 1px solid #c0c0c0; }
.hdots { margin: 2px 0 0 12px; font-size: 14px; line-height: 20px; }
.addsheet { width: 20px; height: 24px; margin-right: 25px; }
.sheettab { width: 54px; height: 21px; background: #fff; border: 1px solid #c0c0c0; border-width: 0 1px; border-bottom: 2px solid #217346; color: #217346; font-weight: 700; }
.navs { display: flex; width: 76px; padding: 7px 14px 0 32px; justify-content: space-between; }

.status { display: flex; align-items: center; height: 17px; padding-left: 5px; background: #333; color: #fff; font-size: 11px; overflow: hidden; }
.pct { width: 38px; }
.zb { width: 15px; height: 17px; font-size: 17px; line-height: 17px; }
.zoom { width: 100px; height: 17px; }
.zoom::-webkit-slider-runnable-track { height: 1px; background: #ccc; }
.zoom::-webkit-slider-thumb { appearance: none; width: 4px; height: 11px; margin-top: -5px; background: #fff; }
.view { width: 33px; height: 17px; }
.sel { background: #0c0c0c; }
.ready { flex: none; margin: 0 -5px 0 16px; }
</style>
